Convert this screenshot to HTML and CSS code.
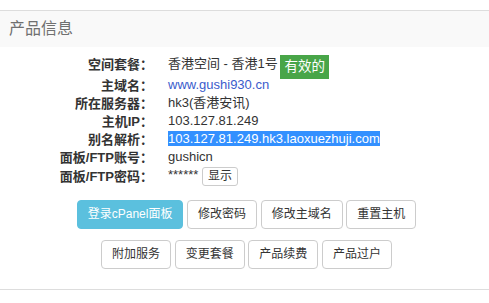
FILE: index.html
```html
<!DOCTYPE html>
<html lang="zh-CN">
<head>
    <meta charset="UTF-8">
    <meta name="viewport" content="width=device-width, initial-scale=1.0">
    <title>产品信息</title>
    <link rel="stylesheet" href="styles.css">
</head>
<body>
    <div class="panel">
        <div class="panel-heading">产品信息</div>

        <div class="panel-body">
            <!-- product details -->
            <div class="info">
                <div class="info-row first">
                    <div class="label">空间套餐<span class="colon">：</span></div>
                    <div class="value">香港空间 - 香港1号 <span class="badge">有效的</span></div>
                </div>
                <div class="info-row">
                    <div class="label">主域名<span class="colon">：</span></div>
                    <div class="value"><a href="#" class="link">www.gushi930.cn</a></div>
                </div>
                <div class="info-row">
                    <div class="label">所在服务器<span class="colon">：</span></div>
                    <div class="value">hk3(香港安讯)</div>
                </div>
                <div class="info-row">
                    <div class="label">主机IP<span class="colon">：</span></div>
                    <div class="value">103.127.81.249</div>
                </div>
                <div class="info-row">
                    <div class="label">别名解析<span class="colon">：</span></div>
                    <div class="value"><span class="picked">103.127.81.249.hk3.laoxuezhuji.com</span></div>
                </div>
                <div class="info-row">
                    <div class="label">面板/FTP账号<span class="colon">：</span></div>
                    <div class="value">gushicn</div>
                </div>
                <div class="info-row last">
                    <div class="label">面板/FTP密码<span class="colon">：</span></div>
                    <div class="value">****** <button class="btn-mini" onclick="showPass(this)">显示</button></div>
                </div>
            </div>

            <!-- actions -->
            <div class="actions">
                <div class="btn-row">
                    <button class="btn btn-info">登录cPanel面板</button>
                    <button class="btn">修改密码</button>
                    <button class="btn">修改主域名</button>
                    <button class="btn">重置主机</button>
                </div>
                <div class="btn-row">
                    <button class="btn">附加服务</button>
                    <button class="btn">变更套餐</button>
                    <button class="btn">产品续费</button>
                    <button class="btn">产品过户</button>
                </div>
            </div>
        </div>
    </div>

    <script>
        function showPass(el) {
            el.parentNode.firstChild.textContent = 'gushi930 ';
        }
    </script>
</body>
</html>
```

FILE: styles.css
```css
body {
    margin: 0;
    padding-top: 10px;
    font-family: "Liberation Sans", "Noto Sans CJK SC", sans-serif;
    font-size: 13px;
    color: #333;
    background-color: white;
}

.panel {
    border-top: 1px solid #ddd;
    border-bottom: 1px solid #ddd;
}

.panel-heading {
    height: 36px;
    line-height: 36px;
    padding-left: 9px;
    font-size: 16px;
    color: #707070;
    background-color: #f9f9f9;
}

.panel-body {
    padding: 8px 0 20px;
}

/* info rows */
.info-row {
    display: flex;
    height: 18px;
    line-height: 18px;
}

.info-row.first {
    height: 21px;
    align-items: flex-start;
}

.info-row.last {
    height: 20px;
    align-items: center;
}

.label {
    width: 153px;
    text-align: right;
    font-weight: bold;
    flex-shrink: 0;
}

/* centred full-width colon, like the YaHei one */
.colon {
    font-family: "Noto Sans CJK TC", sans-serif;
}

.value {
    margin-left: 15px;
    white-space: nowrap;
}

.link {
    color: #3a5ccc;
    text-decoration: none;
}

.picked {
    background-color: #3390ff;
    color: white;
}

.badge {
    display: inline-block;
    height: 24px;
    line-height: 24px;
    padding: 0 4px;
    margin-left: -1px;
    margin-bottom: -3px;
    font-size: 13.5px;
    color: white;
    background-color: #48a548;
    vertical-align: top;
}

.btn-mini {
    font-family: inherit;
    font-size: 12px;
    line-height: 15px;
    padding: 1px 5px;
    color: #333;
    background-color: white;
    border: 1px solid #ccc;
    border-radius: 3px;
    vertical-align: middle;
    cursor: pointer;
}

/* action buttons */
.actions {
    margin-top: 14px;
    padding-left: 4px;
}

.btn-row {
    display: flex;
    justify-content: center;
    gap: 3.6px;
    margin-bottom: 11px;
}

.btn-row:last-child {
    margin-bottom: 0;
}

.btn {
    font-family: inherit;
    font-size: 12px;
    line-height: 17px;
    padding: 5px 10px;
    color: #333;
    background-color: white;
    border: 1px solid #ccc;
    border-radius: 4px;
    cursor: pointer;
}

.btn-info {
    color: white;
    background-color: #5bc0de;
    border-color: #5bc0de;
}
```
